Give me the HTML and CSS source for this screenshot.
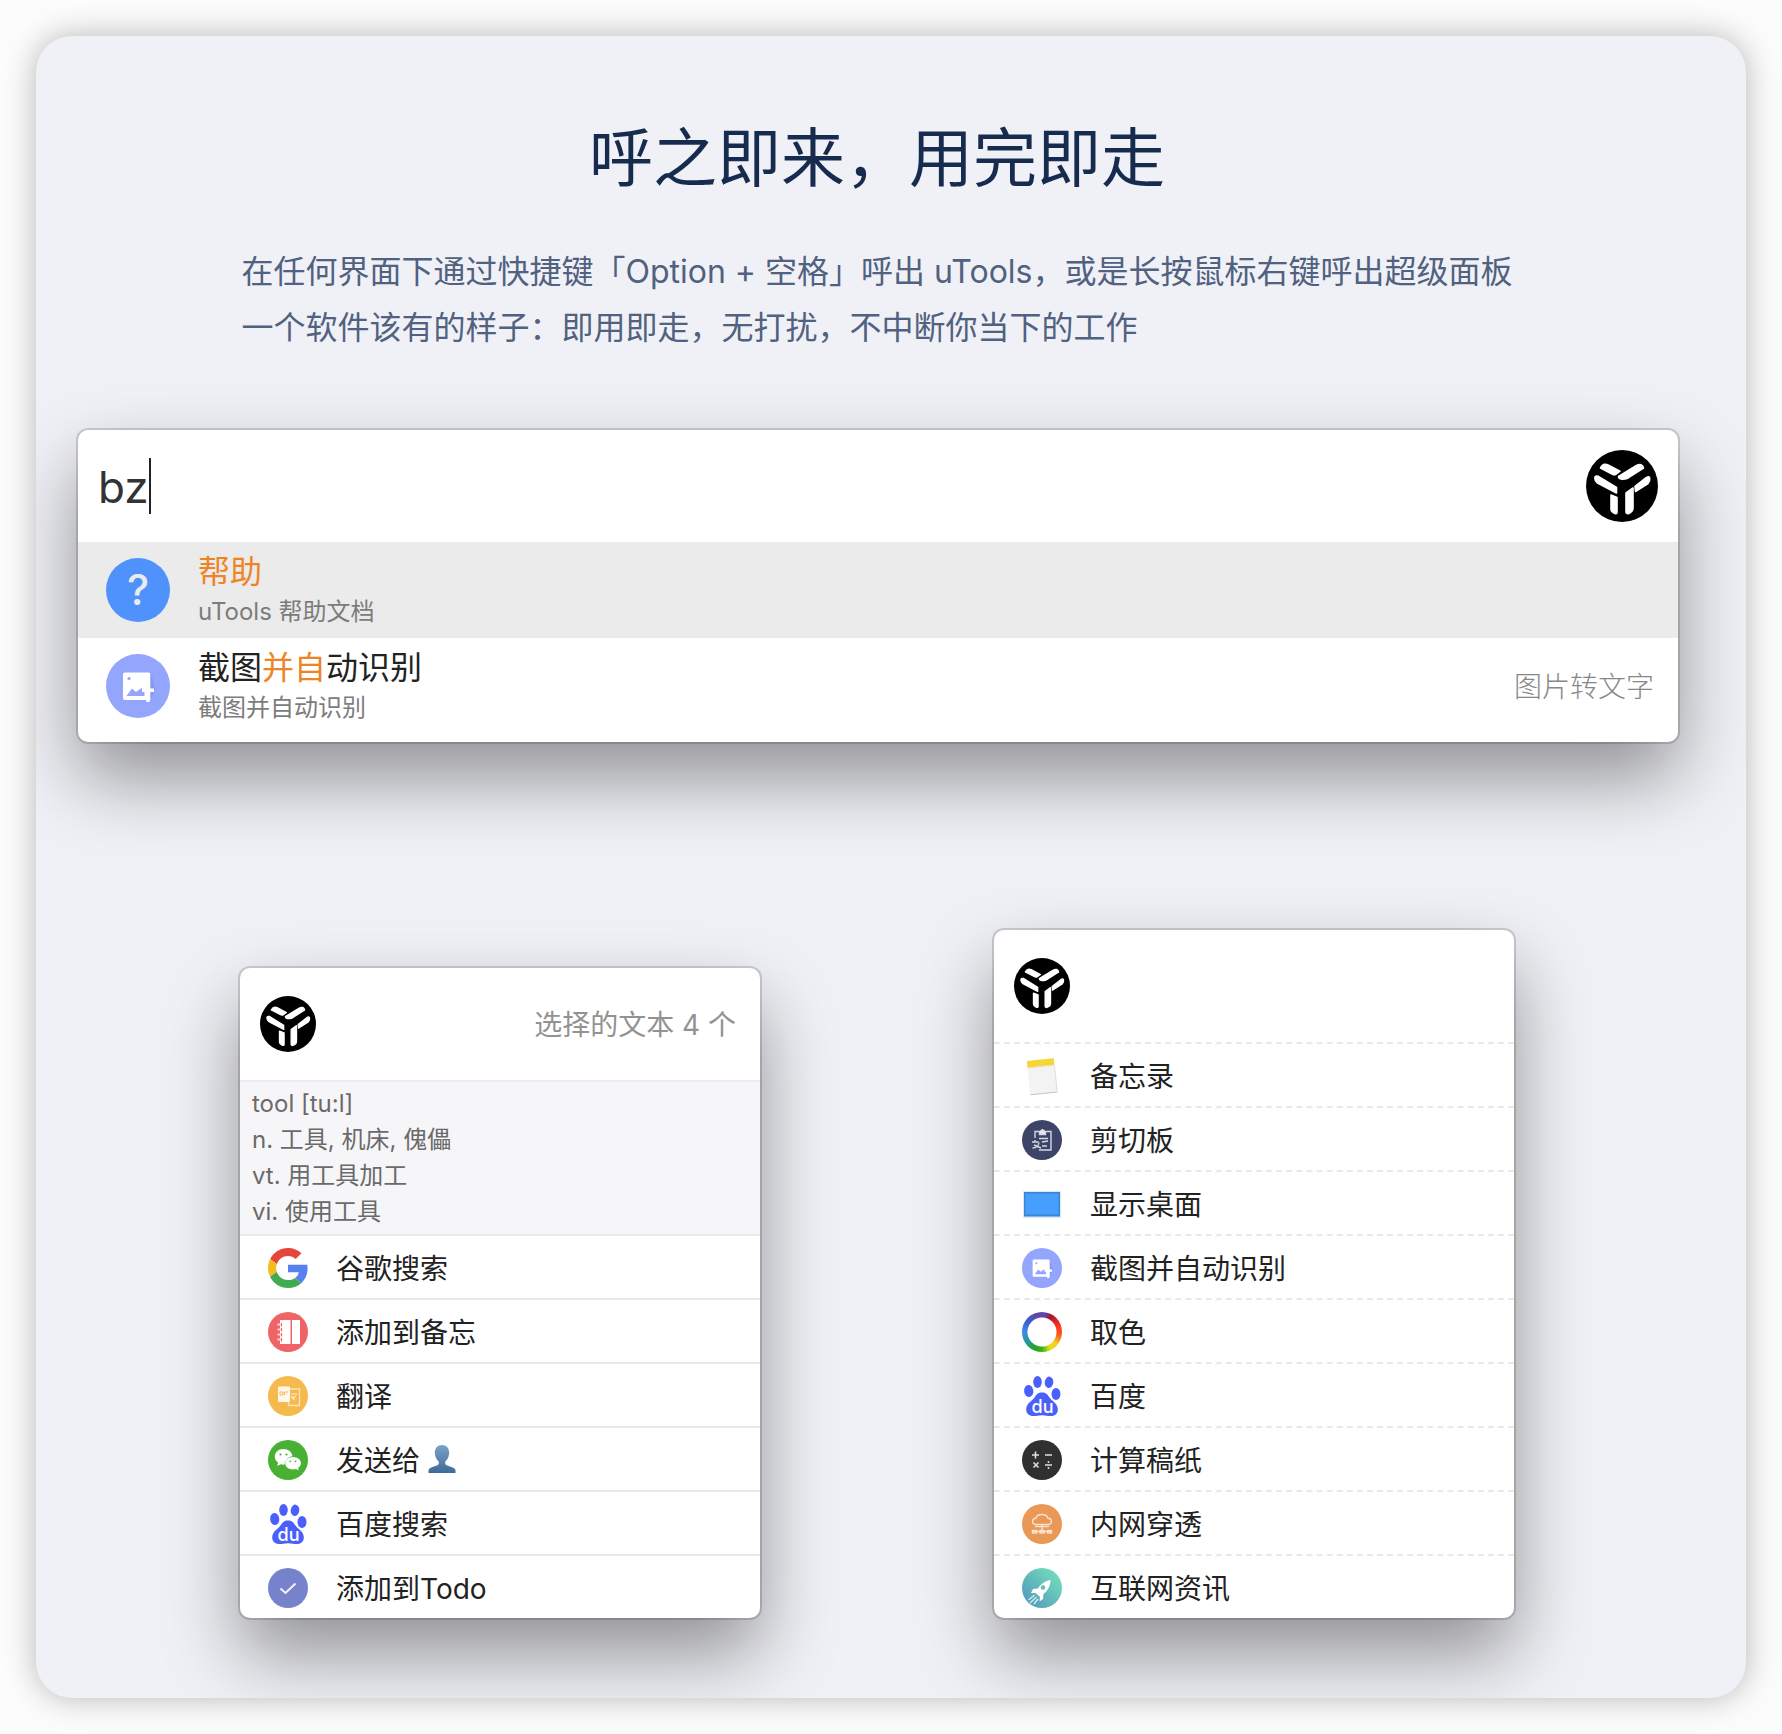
FILE: index.html
```html
<!DOCTYPE html>
<html lang="zh-CN">
<head>
<meta charset="utf-8">
<meta name="viewport" content="width=device-width, initial-scale=1">
<title>uTools</title>
<link rel="stylesheet" href="styles.css">
</head>
<body>
<svg class="sprite" aria-hidden="true">
  <defs>
    <linearGradient id="bust-fill" x1="0" y1="0" x2="0" y2="1"><stop offset="0" stop-color="#7ba3c6"/><stop offset="1" stop-color="#3d6a98"/></linearGradient>
    <linearGradient id="rocket-fill" x1="1" y1="0" x2="0" y2="1"><stop offset=".15" stop-color="#72d9bc"/><stop offset=".85" stop-color="#559fbd"/></linearGradient>
    <symbol id="logo" viewBox="0 0 72 72">
      <circle cx="36" cy="36" r="36" fill="#000"/>
      <g fill="#fff" stroke="#fff" stroke-width="1.600" stroke-linejoin="round">
        <path d="M14.500 18q1.500-3.500 4.500-3.700 1.500-.1 3 .7l12 6.200-4.500 3.300q-1.500.5-3-.3z"/>
        <path d="M32.500 26.500 50.500 15.500q2.500-1.500 4.500-.8 2 .8 2.500 3.300L41 28.500q-3 1-6 .5-2.500-.5-2.500-2.500z"/>
        <path d="M8.800 28q.2-2.500 3.200-1.800l18.500 11.300v5.500L11.500 33q-2.700-2-2.700-5z"/>
        <path d="M49 36.500 60.500 27.500q2.500-1.500 3.200.5.600 3-1.700 5.500L49.500 41.500z"/>
        <path d="M25 45 31 47.500v15q-.5 2-3 .5-3-1.500-3-4z"/>
        <path d="M40 43 47 38v20.500q0 2.500-2.500 4-3.500 2.500-4.500 0z"/>
      </g>
    </symbol>
    <symbol id="shot" viewBox="0 0 64 64">
      <circle cx="32" cy="32" r="32" fill="#94a5fd"/>
      <path d="M23 47 46 44 49 35 46 22 42 19 42 45z" fill="#7384d8" opacity=".35"/>
      <path fill="#fff" fill-rule="evenodd" d="M19 18.500h23.500a1.800 1.800 0 0 1 1.800 1.800V46H19a2 2 0 0 1-2-2V20.500a2 2 0 0 1 2-2zM20.500 42h18v-3.500l-3-4.500-5.500 4-4-3.500z"/>
      <circle cx="23" cy="24.500" r="1.600" fill="#94a5fd"/>
      <path d="M36 34.500h12V38h-4.300v10h-3.400V38H36z" fill="#fff"/>
    </symbol>
    <symbol id="baidu" viewBox="0 0 40 40">
      <g fill="#4b60fb">
        <ellipse cx="15.500" cy="6" rx="4.300" ry="6"/>
        <ellipse cx="27" cy="6.300" rx="4.300" ry="5.700" transform="rotate(8 27 6.300)"/>
        <ellipse cx="6.700" cy="15" rx="4.600" ry="6" transform="rotate(-8 6.700 15)"/>
        <ellipse cx="34" cy="18" rx="4.500" ry="6"/>
        <path d="M20 16.500c4 0 5.500 2 7.500 5 3 4 8.300 6 8.300 12 0 4-2.600 6.500-6.800 6.500-3.500 0-5.500-.8-9-.8s-5.500.8-8.500.8C7 40 4.200 37.500 4.200 33.500c0-6 5.300-8 8.300-12 2-3 3.500-5 7.500-5z"/>
      </g>
      <text x="20.500" y="36.500" class="baidu-mark">du</text>
    </symbol>
  </defs>
</svg>

<main class="card">
  <header class="intro">
    <h1 class="intro-title">呼之即来，用完即走</h1>
    <p class="intro-text">在任何界面下通过快捷键「Option + 空格」呼出 uTools，或是长按鼠标右键呼出超级面板<br>一个软件该有的样子：即用即走，无打扰，不中断你当下的工作</p>
  </header>

  <section class="panel search">
    <div class="search-bar">
      <input class="search-input" type="text" value="bz" size="2" aria-label="搜索">
      <span class="caret"></span>
      <svg class="logo-large"><use href="#logo"/></svg>
    </div>
    <ul class="list">
      <li>
        <button class="result result-active" type="button">
          <svg class="result-icon" viewBox="0 0 64 64"><circle cx="32" cy="32" r="32" fill="#5092fb"/><text x="32" y="47" class="help-mark">?</text></svg>
          <span class="result-body"><span class="result-name"><em class="hit">帮助</em></span><span class="result-desc">uTools 帮助文档</span></span>
        </button>
      </li>
      <li>
        <button class="result" type="button">
          <svg class="result-icon"><use href="#shot"/></svg>
          <span class="result-body"><span class="result-name">截图<em class="hit">并自</em>动识别</span><span class="result-desc">截图并自动识别</span></span>
          <span class="result-tag">图片转文字</span>
        </button>
      </li>
    </ul>
  </section>

  <div class="panels">
    <section class="panel menu">
      <div class="menu-head">
        <svg class="logo-small"><use href="#logo"/></svg>
        <span class="menu-note">选择的文本 4 个</span>
      </div>
      <p class="dict">tool [tu:l]<br>n. 工具, 机床, 傀儡<br>vt. 用工具加工<br>vi. 使用工具</p>
      <ul class="list">
        <li class="item"><button class="item-button" type="button">
          <svg class="item-icon" viewBox="0 0 48 48"><path fill="#e5453b" d="M24 9.500c3.500 0 6.700 1.200 9.200 3.600l6.900-6.900C35.900 2.400 30.500 0 24 0 14.600 0 6.500 5.400 2.600 13.200l8 6.200C12.400 13.700 17.700 9.500 24 9.500z"/><path fill="#5780f0" d="M47.500 24.500c0-1.600-.2-3.100-.4-4.500H24v9h13c-.6 3-2.300 5.500-4.800 7.200l7.700 6c4.500-4.200 7.600-10.400 7.600-17.700z"/><path fill="#f3bd20" d="M10.500 28.600c-.5-1.500-.8-3-.8-4.600s.3-3.100.8-4.600l-8-6.200C.9 16.500 0 20.100 0 24c0 3.900.9 7.500 2.600 10.800z"/><path fill="#40ab50" d="M24 48c6.500 0 11.900-2.100 15.900-5.800l-7.700-6c-2.200 1.500-4.900 2.300-8.200 2.300-6.300 0-11.600-4.200-13.500-9.900l-8 6.200C6.500 42.600 14.600 48 24 48z"/></svg>
          谷歌搜索</button></li>
        <li class="item"><button class="item-button" type="button">
          <svg class="item-icon" viewBox="0 0 40 40"><circle cx="20" cy="20" r="20" fill="#ee6467"/><path d="M12 8h10.500v24H12zM24 8h8v24h-8z" fill="#fff"/><path d="M9.500 12.500h5M9.500 17.500h5M9.500 22.500h5M9.500 27.500h5" stroke="#ffd2d2" stroke-width="2"/><path d="M13.500 11v3.500M13.500 16v3.500M13.500 21v3.500M13.500 26v3.500" stroke="#ee6467"/></svg>
          添加到备忘</button></li>
        <li class="item"><button class="item-button" type="button">
          <svg class="item-icon" viewBox="0 0 40 40"><circle cx="20" cy="20" r="20" fill="#f6b94e"/><rect x="10" y="10.500" width="12" height="15.500" rx="1" fill="#fff8ea"/><path d="M12 19v-3h3v3zm4.500 0v-3h3.500" fill="none" stroke="#f6b94e"/><path d="M22 13h9.500v16.500H21l-1-3.500" fill="none" stroke="#fde4b5" stroke-width="1.300"/><path d="M23 18h6.500M24 22.500l4-2.500M23.500 20.500l3 3.500" fill="none" stroke="#fff0d0" stroke-width="1.200"/></svg>
          翻译</button></li>
        <li class="item"><button class="item-button" type="button">
          <svg class="item-icon" viewBox="0 0 40 40"><circle cx="20" cy="20" r="20" fill="#48b133"/><path d="M15.500 9C10.500 9 6.800 12.300 6.800 16.500c0 2.600 1.200 4.600 3.200 6L9.200 26l3.600-1.800c1.200.4 2.500.5 3.700.4C17 20 20.500 16.500 24.500 16.200 24 12 20.200 9 15.500 9z" fill="#fff"/><path d="M25 17c-4.400 0-7.800 2.800-7.800 6.300s3.400 6.200 7.800 6.200c1 0 2-.2 3-.5l2.800 1.500-.8-2.600c1.900-1.200 3-2.800 3-4.600 0-3.500-3.600-6.300-8-6.300z" fill="#fff"/><g fill="#48b133"><circle cx="12.500" cy="14.500" r="1.100"/><circle cx="18.500" cy="14.500" r="1.100"/><circle cx="22.300" cy="21.300" r=".9"/><circle cx="27.500" cy="21.300" r=".9"/></g></svg>
          发送给 <svg class="bust" viewBox="0 0 28 28"><path d="M14 0c-4.300 0-7.200 3-7.200 7.500 0 4 1.700 7 3.700 8.800.7 1.500.3 3-.6 3.700C7 21.500 1.500 22 .5 25.200V28h27v-2.800c-1-3.200-6.500-3.700-9.400-5.200-.9-.7-1.300-2.200-.6-3.700 2-1.800 3.700-4.800 3.700-8.800C21.200 3 18.300 0 14 0z" fill="url(#bust-fill)"/></svg></button></li>
        <li class="item"><button class="item-button" type="button">
          <svg class="item-icon"><use href="#baidu"/></svg>
          百度搜索</button></li>
        <li class="item"><button class="item-button" type="button">
          <svg class="item-icon" viewBox="0 0 40 40"><circle cx="20" cy="20" r="20" fill="#7683cc"/><path d="m12.500 20.500 5 4.500 10-9.500" fill="none" stroke="#f4f5fb" stroke-width="2"/></svg>
          添加到Todo</button></li>
      </ul>
    </section>

    <section class="panel menu menu-dashed">
      <div class="menu-head">
        <svg class="logo-small"><use href="#logo"/></svg>
      </div>
      <ul class="list">
        <li class="item"><button class="item-button" type="button">
          <svg class="item-icon" viewBox="0 0 40 40"><g transform="rotate(-6 20 20)"><rect x="6.500" y="3.500" width="27" height="34" fill="#f3f3f3"/><rect x="6.500" y="3.500" width="27" height="6.500" fill="#f6d634"/><path d="M6.500 10.500h27" stroke="#f3dcc8"/><path d="M6.500 37.500h27" stroke="#c4c4c4"/><path d="M33.500 11v26" stroke="#dedede"/></g></svg>
          备忘录</button></li>
        <li class="item"><button class="item-button" type="button">
          <svg class="item-icon" viewBox="0 0 40 40"><circle cx="20" cy="20" r="20" fill="#3d4468"/><g fill="none" stroke="#d4d7e4" stroke-width="1.400"><path d="M17 11.500h-4V18M24 11.500h5V30H17M13 22v-2"/><path d="M17.500 14.500v-3l3-2 3 2v3z" fill="#e6e8f0"/><path d="M17 18.500h9M20 22l6-1M20 26h5M10 22h6.500M10.500 28c4 0 6-2 6.500-5.500M12 25l7 3"/></g></svg>
          剪切板</button></li>
        <li class="item"><button class="item-button" type="button">
          <svg class="item-icon" viewBox="0 0 40 40"><rect x="1" y="7" width="38" height="27" fill="#d9e9fa"/><rect x="2" y="8" width="36" height="24.500" fill="#3b86d0"/><rect x="3.500" y="9.500" width="33" height="21" fill="#469ffd"/></svg>
          显示桌面</button></li>
        <li class="item"><button class="item-button" type="button">
          <svg class="item-icon"><use href="#shot"/></svg>
          截图并自动识别</button></li>
        <li class="item"><button class="item-button" type="button">
          <span class="item-icon color-ring"></span>
          取色</button></li>
        <li class="item"><button class="item-button" type="button">
          <svg class="item-icon"><use href="#baidu"/></svg>
          百度</button></li>
        <li class="item"><button class="item-button" type="button">
          <svg class="item-icon" viewBox="0 0 40 40"><circle cx="20" cy="20" r="20" fill="#303030"/><path d="M10 15h7M13.500 11.500v7M23 15h7M11.500 22.500l5 5M16.500 22.500l-5 5M23 25h7" stroke="#e0e0e0" stroke-width="1.600"/><circle cx="26.500" cy="22" r="1" fill="#e0e0e0"/><circle cx="26.500" cy="28" r="1" fill="#e0e0e0"/></svg>
          计算稿纸</button></li>
        <li class="item"><button class="item-button" type="button">
          <svg class="item-icon" viewBox="0 0 40 40"><circle cx="20" cy="20" r="20" fill="#e99855"/><g fill="none" stroke="#fae3d0" stroke-width="1.400"><path d="M14 20.500c-4.500 0-4.500-6 0-6.200 1-5 10.500-5 12 0 4.500.2 4.500 6.200 0 6.200zM20 21v6M11 27.500h18"/><rect x="10.500" y="26.500" width="4" height="2.500"/><rect x="18" y="26.500" width="4" height="2.500"/><rect x="25.500" y="26.500" width="4" height="2.500"/><path d="M13 22.500h14"/></g></svg>
          内网穿透</button></li>
        <li class="item"><button class="item-button" type="button">
          <svg class="item-icon" viewBox="0 0 40 40"><circle cx="20" cy="20" r="20" fill="url(#rocket-fill)"/><path d="M28.500 12c-5 .5-9.500 4-12.500 8.500l-5 .5-2 4h4.500l4.500 4-.5 4.500 3.500-2.500.5-5c4-3 7-8 7-14z" fill="#fff"/><circle cx="21" cy="19.500" r="2.200" fill="#62bcbc"/><path d="m12.500 27-6 5M14.500 29l-6.500 6M16 31l-4 5" stroke="#d3eeee" stroke-width="1.400"/></svg>
          互联网资讯</button></li>
      </ul>
    </section>
  </div>
</main>
</body>
</html>
```
FILE: styles.css
```css
* {
  box-sizing: border-box;
}

body {
  margin: 0;
  padding: 36px;
  background: #fcfcfc;
  color: #222;
  font-family: Inter, "Noto Sans CJK SC", sans-serif;
  font-size: 28px;
}

.sprite {
  position: absolute;
  width: 0;
  height: 0;
}

.card {
  padding: 82px 68px 80px 42px;
  border-radius: 36px;
  background: #f0f1f6;
  box-shadow: 0 0 32px rgba(0, 0, 0, 0.28);
  overflow: hidden;
}

.intro {
  display: flex;
  flex-direction: column;
  align-items: center;
  gap: 46px;
  padding-right: 2px;
}

.intro-title {
  margin: 0;
  color: #162b4e;
  font-size: 64px;
  font-weight: 400;
  line-height: 80px;
}

.intro-text {
  margin: 0;
  color: #516180;
  font-size: 32px;
  line-height: 56px;
}

.panel {
  border-radius: 10px;
  background: #fff;
  box-shadow: 0 0 0 2px rgba(0, 0, 0, 0.15), 0 36px 76px rgba(0, 0, 0, 0.4);
}

.list {
  margin: 0;
  padding: 0;
  list-style: none;
}

.search {
  margin-top: 74px;
  padding-bottom: 8px;
}

.search-bar {
  display: flex;
  align-items: center;
  height: 112px;
  padding: 0 20px;
}

.search-input {
  field-sizing: content;
  padding: 2px 0 0;
  border: 0;
  outline: 0;
  background: none;
  color: #333;
  font-family: inherit;
  font-size: 44px;
}

.caret {
  width: 2px;
  height: 56px;
  background: #222;
}

.logo-large {
  width: 72px;
  height: 72px;
  margin-left: auto;
}

.result,
.item-button {
  display: flex;
  align-items: center;
  gap: 28px;
  width: 100%;
  border: 0;
  background: none;
  color: inherit;
  font: inherit;
  text-align: left;
}

.result {
  height: 96px;
  padding: 0 24px 0 28px;
}

.result-active {
  background: #ebebeb;
}

.result-icon {
  flex: none;
  width: 64px;
  height: 64px;
}

.result-body {
  display: flex;
  flex: 1;
  flex-direction: column;
}

.result-name {
  font-size: 32px;
  line-height: 44px;
}

.result-desc {
  color: #7c7c7c;
  font-size: 24px;
  line-height: 36px;
}

.hit {
  color: #ee8425;
  font-style: normal;
}

.result-tag,
.menu-note {
  padding-bottom: 2px;
}

.result-tag {
  color: #888;
  font-weight: 300;
}

.help-mark {
  fill: #ebebeb;
  font-size: 42px;
  font-weight: 500;
  text-anchor: middle;
}

.baidu-mark {
  fill: #fff;
  font-size: 18px;
  font-weight: 500;
  text-anchor: middle;
}

.panels {
  display: flex;
  align-items: flex-end;
  justify-content: center;
  gap: 234px;
  margin-top: 188px;
  padding-right: 2px;
}

.menu {
  flex: 0 1 520px;
}

.menu-head {
  display: flex;
  align-items: center;
  justify-content: space-between;
  height: 112px;
  padding: 0 24px 0 20px;
}

.logo-small {
  width: 56px;
  height: 56px;
}

.menu-note {
  color: #929292;
}

.dict {
  margin: 0;
  padding: 4px 12px;
  border-top: 2px solid #ececf2;
  background: #f6f6f9;
  color: #6a6a6a;
  font-size: 24px;
  line-height: 36px;
}

.item {
  border-top: 2px solid #e9e9eb;
}

.menu-dashed .item {
  border-top-style: dashed;
}

.item-button {
  height: 62px;
  padding: 0 28px;
}

.item-icon {
  flex: none;
  width: 40px;
  height: 40px;
  margin-top: 2px;
}

.color-ring {
  border-radius: 50%;
  background:
    radial-gradient(circle, #fff 0 14px, transparent 15px),
    conic-gradient(#6046a8 0deg 10deg, #a8152a 30deg, #fb2d24 65deg, #fb5a20 100deg, #f8d021 130deg, #dfdf20 155deg, #35b515 180deg, #2aa12b 205deg, #259b94 235deg, #3c8be8 270deg, #3862cf 305deg, #6046a8 340deg);
}

.bust {
  width: 28px;
  height: 28px;
  margin-left: -20px;
}
```
